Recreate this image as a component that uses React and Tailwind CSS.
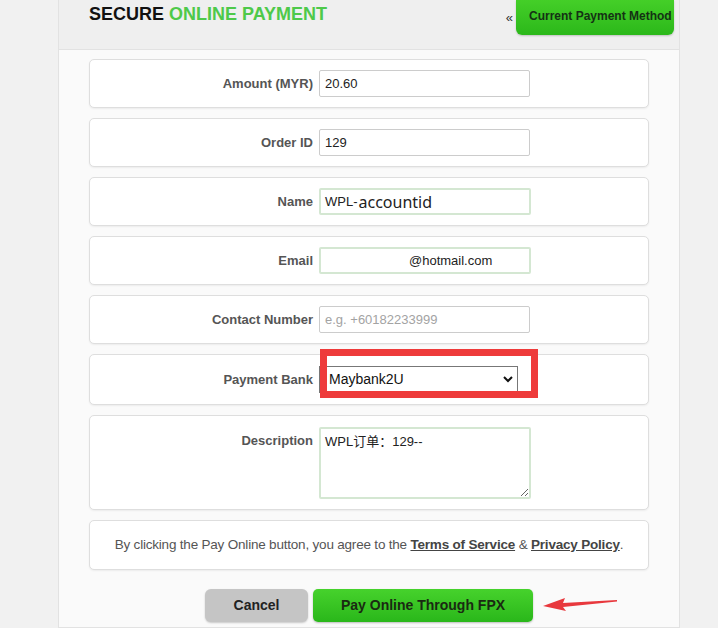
import { useState } from "react";

const font = "font-['Liberation_Sans',Arial,sans-serif]";

function Row({ label, top = false, className = "", children }) {
  return (
    <div
      className={`flex rounded-[5px] border border-[#dedede] bg-white shadow-[0_1px_2px_rgba(0,0,0,0.06)] ${
        top ? "items-start" : "items-center"
      } ${className}`}
    >
      <label
        className={`w-[229px] shrink-0 pr-[6px] text-right text-[13px] font-bold text-[#555] ${
          top ? "pt-[4px]" : ""
        }`}
      >
        {label}
      </label>
      {children}
    </div>
  );
}

function App() {
  const [bank, setBank] = useState("Maybank2U");

  return (
    <div className={`min-h-screen bg-[#f1f1f1] ${font}`}>
      <div className="ml-[58px] w-[622px] border-x border-b border-[#e2e2e2] bg-[#fafafa]">
        {/* Header */}
        <div className="flex h-[50px] justify-between border-b border-[#e2e2e2] bg-[#efefef] pl-[30px] pr-[5px]">
          <h1 className="mt-[4px] text-[18px] font-bold leading-[21px] text-[#111]">
            SECURE <span className="text-[#4ec94a]">ONLINE PAYMENT</span>
          </h1>
          <div className="flex items-start">
            <span className="mr-[3px] mt-[8px] text-[13px] text-[#333]">«</span>
            <button className="h-[35px] w-[158px] rounded-b-[6px] bg-gradient-to-b from-[#44cf28] to-[#2bb81a] pb-[4px] pl-[13px] text-left text-[12px] font-bold text-[#143214] shadow-[0_1px_2px_rgba(0,0,0,0.2)]">
              Current Payment Method
            </button>
          </div>
        </div>

        {/* Form rows */}
        <div className="flex flex-col gap-[10px] px-[30px] pt-[9px]">
          <Row label="Amount (MYR)" className="h-[49px]">
            <input
              readOnly
              value="20.60"
              className="h-[27px] w-[211px] rounded-[2px] border border-[#cccccc] bg-white px-[5px] text-[13px] text-[#222] outline-none"
            />
          </Row>
          <Row label="Order ID" className="h-[49px]">
            <input
              readOnly
              value="129"
              className="h-[27px] w-[211px] rounded-[2px] border border-[#cccccc] bg-white px-[5px] text-[13px] text-[#222] outline-none"
            />
          </Row>
          <Row label="Name" className="h-[49px]">
            <div className="flex h-[27px] w-[212px] items-center rounded-[2px] border-2 border-[#d4e7d2] bg-white px-[4px] text-[13px] text-[#222]">
              <span>WPL-</span>
              <span className="ml-[1px] font-['Noto_Sans',sans-serif] text-[16px] leading-none">
                accountid
              </span>
            </div>
          </Row>
          <Row label="Email" className="h-[49px]">
            <input
              readOnly
              value="@hotmail.com"
              className="h-[27px] w-[212px] rounded-[2px] border-2 border-[#d4e7d2] bg-white pl-[88px] text-[13px] text-[#222] outline-none"
            />
          </Row>
          <Row label="Contact Number" className="h-[49px]">
            <input
              placeholder="e.g. +60182233999"
              className="h-[27px] w-[211px] rounded-[2px] border border-[#cccccc] bg-white px-[5px] text-[13px] text-[#222] outline-none placeholder:text-[#a3a3a3]"
            />
          </Row>
          <Row label="Payment Bank" className="h-[51px]">
            <div className="relative">
              <select
                value={bank}
                onChange={(e) => setBank(e.target.value)}
                className="h-[27px] w-[199px] appearance-none rounded-none border border-[#777] bg-white pl-[9px] text-[14px] text-[#111] outline-none"
              >
                <option>Maybank2U</option>
                <option>CIMB Clicks</option>
                <option>Public Bank</option>
                <option>RHB Now</option>
              </select>
              <svg
                className="pointer-events-none absolute right-[5px] top-[10px]"
                width="10"
                height="7"
                viewBox="0 0 10 7"
              >
                <path d="M1 1l4 4 4-4" fill="none" stroke="#111" strokeWidth="2" />
              </svg>
              {/* annotation box */}
              <div className="pointer-events-none absolute left-[1px] top-[-17px] h-[49px] w-[218px] border-[7px] border-[#ee3b3b]" />
            </div>
          </Row>
          <Row label="Description" top className="h-[95px] pt-[11px]">
            <textarea
              readOnly
              value="WPL订单：129--"
              className="h-[72px] w-[212px] rounded-[2px] border-2 border-[#d4e7d2] bg-white px-[4px] py-[3px] font-['Liberation_Sans','Noto_Sans_CJK_SC',sans-serif] text-[13px] text-[#222] outline-none"
            />
          </Row>
          <div className="flex h-[50px] items-center justify-center rounded-[5px] border border-[#dedede] bg-white text-[13.5px] text-[#555] shadow-[0_1px_2px_rgba(0,0,0,0.06)]">
            <p className="tracking-[-0.2px]">
              By clicking the Pay Online button, you agree to the{" "}
              <a className="font-bold text-[#444] underline">Terms of Service</a> &amp;{" "}
              <a className="font-bold text-[#444] underline">Privacy Policy</a>.
            </p>
          </div>
        </div>

        {/* Buttons */}
        <div className="relative flex justify-center gap-[5px] pb-[5px] pt-[19px]">
          <button className="h-[33px] w-[103px] rounded-[6px] bg-[#c5c5c5] text-[14px] font-bold text-[#222] shadow-[0_1px_2px_rgba(0,0,0,0.2)]">
            Cancel
          </button>
          <button className="h-[33px] w-[220px] rounded-[5px] bg-gradient-to-b from-[#46d22c] to-[#29b71a] text-[14px] font-bold text-[#1a2a12] shadow-[0_1px_2px_rgba(0,0,0,0.25)]">
            Pay Online Through FPX
          </button>
          <svg
            className="pointer-events-none absolute left-[483px] top-[26px]"
            width="76"
            height="16"
            viewBox="0 0 76 16"
          >
            <polygon
              points="1,10 23,2 21,7 75,4 75,5.5 21,11 24,15"
              fill="#e8383d"
            />
          </svg>
        </div>
      </div>
    </div>
  );
}

export default App;
